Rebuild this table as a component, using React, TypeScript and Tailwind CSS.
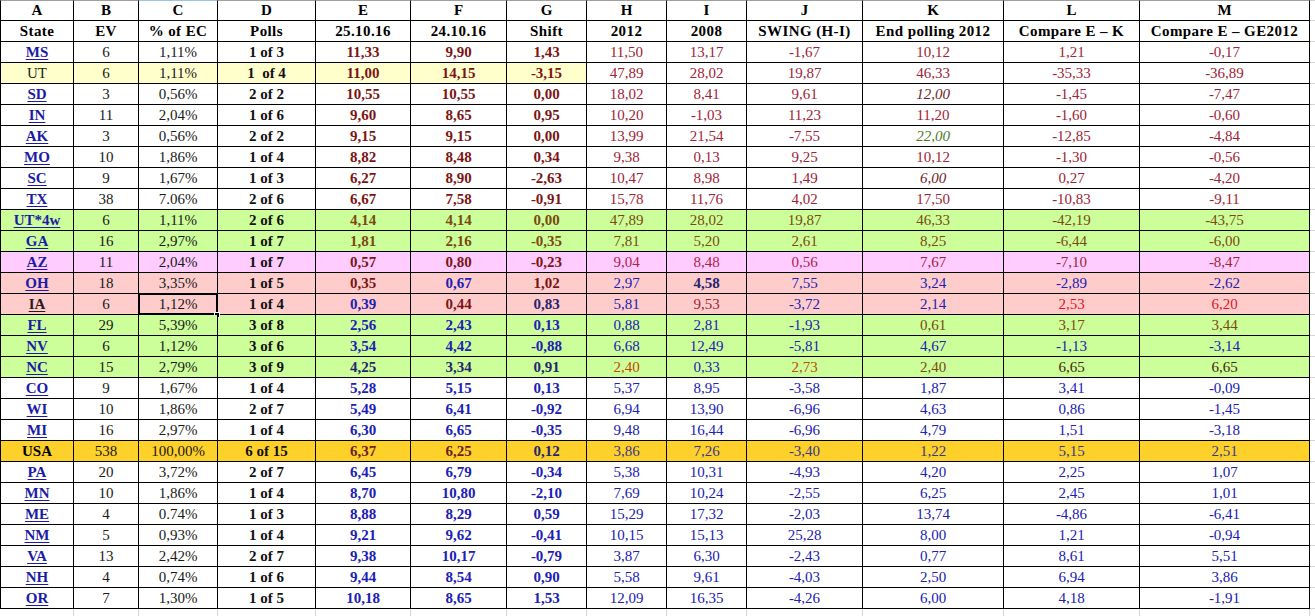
import React from "react";

// colour keys used in the value columns (E..M)
const COL: Record<string, string> = {
  r: "text-[#7d1414]",
  c: "text-[#a02336]",
  m: "text-[#6e1e24]",
  w: "text-[#7a4a0e]",
  b: "text-[#2020b4]",
  n: "text-[#25256e]",
  o: "text-[#c2470a]",
  x: "text-[#e3141e]",
  g: "text-[#4a7d1e]",
  k: "text-[#3d2a08]",
  p: "text-[#b0204c]",
  u: "text-[#38388c]",
};

const FILL: Record<string, string> = {
  none: "bg-white",
  yellow: "bg-[#ffffcc]",
  green: "bg-[#ccff99]",
  pink: "bg-[#ffccff]",
  salmon: "bg-[#ffcccc]",
  gold: "bg-[#fed02a]",
};

type Row = {
  st: string;
  kind: "link" | "plain" | "dark" | "total";
  ev: string;
  pct: string;
  polls: string;
  vals: string[];
  colors: string;
  fill: keyof typeof FILL;
  fillTo?: number;
};

const rows: Row[] = [
  { st: "MS", kind: "link", ev: "6", pct: "1,11%", polls: "1 of 3", vals: ["11,33", "9,90", "1,43", "11,50", "13,17", "-1,67", "10,12", "1,21", "-0,17"], colors: "rrrcccccc", fill: "none" },
  { st: "UT", kind: "plain", ev: "6", pct: "1,11%", polls: "1  of 4", vals: ["11,00", "14,15", "-3,15", "47,89", "28,02", "19,87", "46,33", "-35,33", "-36,89"], colors: "rrrcccccc", fill: "yellow", fillTo: 7 },
  { st: "SD", kind: "link", ev: "3", pct: "0,56%", polls: "2 of 2", vals: ["10,55", "10,55", "0,00", "18,02", "8,41", "9,61", "~12,00", "-1,45", "-7,47"], colors: "rrrcccmcc", fill: "none" },
  { st: "IN", kind: "link", ev: "11", pct: "2,04%", polls: "1 of 6", vals: ["9,60", "8,65", "0,95", "10,20", "-1,03", "11,23", "11,20", "-1,60", "-0,60"], colors: "rrrcccccc", fill: "none" },
  { st: "AK", kind: "link", ev: "3", pct: "0,56%", polls: "2 of 2", vals: ["9,15", "9,15", "0,00", "13,99", "21,54", "-7,55", "~22,00", "-12,85", "-4,84"], colors: "rrrcccgcc", fill: "none" },
  { st: "MO", kind: "link", ev: "10", pct: "1,86%", polls: "1 of 4", vals: ["8,82", "8,48", "0,34", "9,38", "0,13", "9,25", "10,12", "-1,30", "-0,56"], colors: "rrrcccccc", fill: "none" },
  { st: "SC", kind: "link", ev: "9", pct: "1,67%", polls: "1 of 3", vals: ["6,27", "8,90", "-2,63", "10,47", "8,98", "1,49", "~6,00", "0,27", "-4,20"], colors: "rrrcccmcc", fill: "none" },
  { st: "TX", kind: "link", ev: "38", pct: "7.06%", polls: "2 of 6", vals: ["6,67", "7,58", "-0,91", "15,78", "11,76", "4,02", "17,50", "-10,83", "-9,11"], colors: "rrrcccccc", fill: "none" },
  { st: "UT*4w", kind: "link", ev: "6", pct: "1,11%", polls: "2 of 6", vals: ["4,14", "4,14", "0,00", "47,89", "28,02", "19,87", "46,33", "-42,19", "-43,75"], colors: "wwwwwwwww", fill: "green" },
  { st: "GA", kind: "link", ev: "16", pct: "2,97%", polls: "1 of 7", vals: ["1,81", "2,16", "-0,35", "7,81", "5,20", "2,61", "8,25", "-6,44", "-6,00"], colors: "wwwwwwwww", fill: "green" },
  { st: "AZ", kind: "link", ev: "11", pct: "2,04%", polls: "1 of 7", vals: ["0,57", "0,80", "-0,23", "9,04", "8,48", "0,56", "7,67", "-7,10", "-8,47"], colors: "rrrpppccc", fill: "pink" },
  { st: "OH", kind: "link", ev: "18", pct: "3,35%", polls: "1 of 5", vals: ["0,35", "0,67", "1,02", "2,97", "!4,58", "7,55", "3,24", "-2,89", "-2,62"], colors: "rbrbnbbbb", fill: "salmon" },
  { st: "IA", kind: "dark", ev: "6", pct: "1,12%", polls: "1 of 4", vals: ["0,39", "0,44", "0,83", "5,81", "9,53", "-3,72", "2,14", "2,53", "6,20"], colors: "brnbcbbxx", fill: "salmon" },
  { st: "FL", kind: "link", ev: "29", pct: "5,39%", polls: "3 of 8", vals: ["2,56", "2,43", "0,13", "0,88", "2,81", "-1,93", "0,61", "3,17", "3,44"], colors: "bbbbbbwww", fill: "green" },
  { st: "NV", kind: "link", ev: "6", pct: "1,12%", polls: "3 of 6", vals: ["3,54", "4,42", "-0,88", "6,68", "12,49", "-5,81", "4,67", "-1,13", "-3,14"], colors: "bbbbbbbbb", fill: "green" },
  { st: "NC", kind: "link", ev: "15", pct: "2,79%", polls: "3 of 9", vals: ["4,25", "3,34", "0,91", "2,40", "0,33", "2,73", "2,40", "6,65", "6,65"], colors: "nnnobowkk", fill: "green" },
  { st: "CO", kind: "link", ev: "9", pct: "1,67%", polls: "1 of 4", vals: ["5,28", "5,15", "0,13", "5,37", "8,95", "-3,58", "1,87", "3,41", "-0,09"], colors: "bbbbbbbbb", fill: "none" },
  { st: "WI", kind: "link", ev: "10", pct: "1,86%", polls: "2 of 7", vals: ["5,49", "6,41", "-0,92", "6,94", "13,90", "-6,96", "4,63", "0,86", "-1,45"], colors: "bbbbbbbbb", fill: "none" },
  { st: "MI", kind: "link", ev: "16", pct: "2,97%", polls: "1 of 4", vals: ["6,30", "6,65", "-0,35", "9,48", "16,44", "-6,96", "4,79", "1,51", "-3,18"], colors: "bbbbbbbbb", fill: "none" },
  { st: "USA", kind: "total", ev: "538", pct: "100,00%", polls: "6 of 15", vals: ["6,37", "6,25", "0,12", "3,86", "7,26", "-3,40", "1,22", "5,15", "2,51"], colors: "mmnuuuuuu", fill: "gold" },
  { st: "PA", kind: "link", ev: "20", pct: "3,72%", polls: "2 of 7", vals: ["6,45", "6,79", "-0,34", "5,38", "10,31", "-4,93", "4,20", "2,25", "1,07"], colors: "bbbbbbbbb", fill: "none" },
  { st: "MN", kind: "link", ev: "10", pct: "1,86%", polls: "1 of 4", vals: ["8,70", "10,80", "-2,10", "7,69", "10,24", "-2,55", "6,25", "2,45", "1,01"], colors: "bbbbbbbbb", fill: "none" },
  { st: "ME", kind: "link", ev: "4", pct: "0.74%", polls: "1 of 3", vals: ["8,88", "8,29", "0,59", "15,29", "17,32", "-2,03", "13,74", "-4,86", "-6,41"], colors: "bbbbbbbbb", fill: "none" },
  { st: "NM", kind: "link", ev: "5", pct: "0,93%", polls: "1 of 4", vals: ["9,21", "9,62", "-0,41", "10,15", "15,13", "25,28", "8,00", "1,21", "-0,94"], colors: "bbbbbbbbb", fill: "none" },
  { st: "VA", kind: "link", ev: "13", pct: "2,42%", polls: "2 of 7", vals: ["9,38", "10,17", "-0,79", "3,87", "6,30", "-2,43", "0,77", "8,61", "5,51"], colors: "bbbbbbbbb", fill: "none" },
  { st: "NH", kind: "link", ev: "4", pct: "0,74%", polls: "1 of 6", vals: ["9,44", "8,54", "0,90", "5,58", "9,61", "-4,03", "2,50", "6,94", "3,86"], colors: "bbbbbbbbb", fill: "none" },
  { st: "OR", kind: "link", ev: "7", pct: "1,30%", polls: "1 of 5", vals: ["10,18", "8,65", "1,53", "12,09", "16,35", "-4,26", "6,00", "4,18", "-1,91"], colors: "bbbbbbbbb", fill: "none" },
];

const letters = ["A", "B", "C", "D", "E", "F", "G", "H", "I", "J", "K", "L", "M"];
const titles = ["State", "EV", "% of EC", "Polls", "25.10.16", "24.10.16", "Shift", "2012", "2008", "SWING (H-I)", "End polling 2012", "Compare E – K", "Compare E – GE2012"];

const cell = "flex items-center justify-center border-r border-b border-black whitespace-pre leading-none";
const gap = "border-b border-[#d4d4d4] bg-white";

function StateCell({ row, bg }: { row: Row; bg: string }) {
  const base = `${cell} border-l ${bg}`;
  if (row.kind === "link")
    return <div className={`${base} font-bold text-[#1b1ba8] underline underline-offset-2`}>{row.st}</div>;
  if (row.kind === "dark")
    return <div className={`${base} font-bold text-[#2b1a1a] underline underline-offset-2`}>{row.st}</div>;
  if (row.kind === "total") return <div className={`${base} font-bold text-black`}>{row.st}</div>;
  return <div className={`${base} text-[#1a1a1a]`}>{row.st}</div>;
}

export default function App() {
  return (
    <div className="w-[1315px] h-[616px] overflow-hidden bg-white font-['Liberation_Serif',serif] text-[15px]">
      <div className="grid grid-cols-[74px_65px_79px_98px_95px_96px_80px_80px_80px_116px_141px_136px_170px_20px] auto-rows-[21px]">
        {letters.map((l, i) => (
          <div
            key={l}
            className={`${cell} font-bold text-black border-t ${i === 0 ? "border-l" : ""} ${i === 2 ? "border-t-[#9dc3e6]" : "border-t-[#a0a0a0]"}`}
          >
            {l}
          </div>
        ))}
        <div className={`${gap} border-t border-t-[#d4d4d4]`} />
        {titles.map((t, i) => (
          <div key={t} className={`${cell} font-bold text-black tracking-[0.4px] ${i === 0 ? "border-l" : ""}`}>
            {t}
          </div>
        ))}
        <div className={gap} />

        {rows.map((row) => {
          const bgAt = (i: number) =>
            row.fillTo !== undefined && i >= row.fillTo ? FILL.none : FILL[row.fill];
          return (
            <React.Fragment key={row.st}>
              <StateCell row={row} bg={bgAt(0)} />
              <div className={`${cell} ${bgAt(1)} text-[#1a1a1a]`}>{row.ev}</div>
              <div className={`${cell} ${bgAt(2)} text-[#1a1a1a] relative`}>
                {row.pct}
                {row.st === "IA" && (
                  <>
                    <div className="absolute -left-px -top-px -right-px -bottom-px border-2 border-black" />
                    <div className="absolute -right-[3px] -bottom-[4px] w-[6px] h-[6px] bg-black border border-white" />
                  </>
                )}
              </div>
              <div className={`${cell} ${bgAt(3)} font-bold text-[#111]`}>{row.polls}</div>
              {row.vals.map((raw, j) => {
                const bold = j < 3 || raw.startsWith("!");
                const italic = raw.startsWith("~");
                const v = raw.replace(/^[!~]/, "");
                return (
                  <div
                    key={j}
                    className={`${cell} ${bgAt(4 + j)} ${COL[row.colors[j]]} ${bold ? "font-bold" : ""} ${italic ? "italic" : ""}`}
                  >
                    {v}
                  </div>
                );
              })}
              <div className={gap} />
            </React.Fragment>
          );
        })}

        {letters.map((l) => (
          <div key={"e" + l} className="border-r border-[#d4d4d4] bg-white" />
        ))}
        <div className="bg-white" />
      </div>
    </div>
  );
}
